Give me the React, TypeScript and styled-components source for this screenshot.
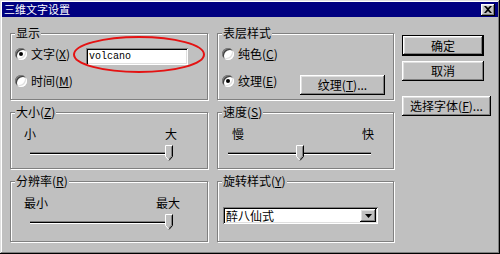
import React from "react";
import styled, { createGlobalStyle } from "styled-components";

const GlobalStyle = createGlobalStyle`
  html, body {
    margin: 0;
    padding: 0;
    background: #c0c0c0;
  }
  body {
    font-family: "Noto Sans CJK SC", "Liberation Sans", sans-serif;
    font-size: 12px;
    color: #000;
  }
`;

const raised = `
  box-shadow: inset -1px -1px #000, inset 1px 1px #fff, inset -2px -2px #808080, inset 2px 2px #dfdfdf;
`;

const sunken = `
  box-shadow: inset 1px 1px #808080, inset -1px -1px #fff, inset 2px 2px #000, inset -2px -2px #dfdfdf;
`;

const Window = styled.div`
  position: relative;
  width: 500px;
  height: 254px;
  box-sizing: border-box;
  padding: 2px;
  background: #c0c0c0;
  box-shadow: inset -1px -1px #000, inset 1px 1px #dfdfdf, inset -2px -2px #808080, inset 2px 2px #fff;
  display: flex;
  flex-direction: column;
`;

const TitleBar = styled.div`
  height: 15px;
  flex: none;
  background: #000080;
  color: #fff;
  display: flex;
  align-items: center;
  justify-content: space-between;
  padding: 0 3px 0 2px;
`;

const Title = styled.span`
  font-size: 11px;
  line-height: 15px;
  letter-spacing: 0;
`;

const CloseButton = styled.span`
  width: 14px;
  height: 12px;
  background: #c0c0c0;
  ${raised}
  display: flex;
  align-items: center;
  justify-content: center;
`;

const Body = styled.div`
  display: flex;
  align-items: flex-start;
  padding: 16px 0 0 8px;
`;

const Groups = styled.div`
  display: grid;
  grid-template-columns: 198px 177px;
  grid-template-rows: 67px 57px 61px;
  column-gap: 9px;
  row-gap: 12px;
`;

const Group = styled.div<{ $pad: string; $gap?: number }>`
  position: relative;
  box-sizing: border-box;
  border: 1px solid #808080;
  box-shadow: 1px 1px 0 #fff, inset 1px 1px 0 #fff;
  padding: ${(p) => p.$pad};
  display: flex;
  flex-direction: column;
  gap: ${(p) => p.$gap ?? 0}px;
`;

const Legend = styled.span`
  position: absolute;
  top: -8px;
  left: 4px;
  padding: 0 1px;
  background: #c0c0c0;
  line-height: 14px;
  white-space: nowrap;
`;

const Row = styled.div`
  display: flex;
  align-items: center;
  height: 20px;
`;

const Option = styled.label<{ $w: number }>`
  display: flex;
  align-items: center;
  gap: 4px;
  width: ${(p) => p.$w}px;
  flex: none;
  line-height: 14px;
  white-space: nowrap;
`;

const RadioDot = styled.span<{ $checked?: boolean }>`
  position: relative;
  flex: none;
  width: 12px;
  height: 12px;
  border-radius: 50%;
  background: #fff;
  box-shadow: inset 1px 1px 0 #808080, inset -1px -1px 0 #fff, inset 2px 2px 0 #404040,
    inset -2px -2px 0 #dfdfdf;
  &::after {
    content: "";
    display: ${(p) => (p.$checked ? "block" : "none")};
    position: absolute;
    left: 4px;
    top: 4px;
    width: 4px;
    height: 4px;
    border-radius: 50%;
    background: #000;
  }
`;

const TextField = styled.div`
  width: 102px;
  height: 17px;
  margin-top: 4px;
  box-sizing: border-box;
  padding-left: 3px;
  background: #fff;
  ${sunken}
  font-family: "Liberation Mono", monospace;
  font-size: 10px;
  line-height: 17px;
`;

const Button = styled.div<{ $w: number; $h: number; $default?: boolean; $mt?: number }>`
  width: ${(p) => p.$w}px;
  height: ${(p) => p.$h}px;
  margin-top: ${(p) => p.$mt ?? 0}px;
  box-sizing: border-box;
  flex: none;
  background: #c0c0c0;
  border: ${(p) => (p.$default ? "1px solid #000" : "0")};
  ${raised}
  display: flex;
  align-items: center;
  justify-content: center;
  line-height: 14px;
  white-space: nowrap;
`;

const Scale = styled.div<{ $pl: number; $pr: number }>`
  display: flex;
  justify-content: space-between;
  padding: 0 ${(p) => p.$pr}px 0 ${(p) => p.$pl}px;
  line-height: 14px;
`;

const Slider = styled.div<{ $ml: number }>`
  position: relative;
  width: 143px;
  height: 16px;
  margin: 4px 0 0 ${(p) => p.$ml}px;
`;

const Track = styled.div`
  margin-top: 7px;
  height: 1px;
  background: #000;
  border-top: 1px solid #808080;
  border-bottom: 1px solid #fff;
`;

const ThumbWrap = styled.span`
  position: absolute;
  top: 0;
  width: 8px;
  height: 16px;
  display: block;
`;

const Combo = styled.div`
  width: 155px;
  height: 17px;
  box-sizing: border-box;
  padding: 2px;
  background: #fff;
  ${sunken}
  display: flex;
  align-items: center;
`;

const ComboText = styled.span`
  flex: 1;
  padding-left: 1px;
  line-height: 13px;
`;

const ComboButton = styled.span`
  width: 16px;
  height: 13px;
  background: #c0c0c0;
  ${raised}
  display: flex;
  align-items: center;
  justify-content: center;
`;

const ButtonCol = styled.div`
  display: flex;
  flex-direction: column;
  margin-left: 8px;
  padding-top: 2px;
`;

const Mark = styled.svg`
  position: absolute;
  left: 62px;
  top: 2px;
  pointer-events: none;
`;

const Thumb = ({ value }: { value: number }) => (
  <ThumbWrap style={{ left: Math.round(value * 135) }}>
    <svg width="8" height="16" viewBox="0 0 8 16">
      <polygon points="0.5,0.5 7.5,0.5 7.5,11.5 4,15.5 0.5,11.5" fill="#c0c0c0" />
      <polyline points="4,15.5 0.5,11.5 0.5,0.5 7.5,0.5" fill="none" stroke="#fff" strokeWidth="1" />
      <polyline points="7.5,0.5 7.5,11.5 4,15.5" fill="none" stroke="#000" strokeWidth="1" />
      <polyline points="6.5,1.5 6.5,11 4,14" fill="none" stroke="#808080" strokeWidth="1" />
    </svg>
  </ThumbWrap>
);

const SliderGroup = ({
  title,
  low,
  high,
  value,
  pl,
  pr,
  ml,
}: {
  title: React.ReactNode;
  low: string;
  high: string;
  value: number;
  pl: number;
  pr: number;
  ml: number;
}) => (
  <Group $pad="14px 0 0 0">
    <Legend>{title}</Legend>
    <Scale $pl={pl} $pr={pr}>
      <span>{low}</span>
      <span>{high}</span>
    </Scale>
    <Slider $ml={ml}>
      <Track />
      <Thumb value={value} />
    </Slider>
  </Group>
);

const App = () => {
  return (
    <>
      <GlobalStyle />
      <Window>
        <TitleBar>
          <Title>三维文字设置</Title>
          <CloseButton>
            <svg width="8" height="7" viewBox="0 0 8 7">
              <path d="M0 0h2l2 2 2-2h2L5 3.5 8 7H6L4 5 2 7H0l3-3.5z" fill="#000" />
            </svg>
          </CloseButton>
        </TitleBar>
        <Body>
          <Groups>
            <Group $pad="10px 0 0 4px" $gap={7}>
              <Legend>显示</Legend>
              <Row>
                <Option $w={71}>
                  <RadioDot $checked />
                  <span>
                    文字(<u>X</u>)
                  </span>
                </Option>
                <TextField>volcano</TextField>
              </Row>
              <Row>
                <Option $w={71}>
                  <RadioDot />
                  <span>
                    时间(<u>M</u>)
                  </span>
                </Option>
              </Row>
              <Mark width="134" height="38" viewBox="0 0 134 38">
                <ellipse cx="66" cy="18.5" rx="65" ry="17.5" fill="none" stroke="#e41212" strokeWidth="2" />
              </Mark>
            </Group>

            <Group $pad="10px 0 0 4px" $gap={7}>
              <Legend>表层样式</Legend>
              <Row>
                <Option $w={78}>
                  <RadioDot />
                  <span>
                    纯色(<u>C</u>)
                  </span>
                </Option>
              </Row>
              <Row>
                <Option $w={78}>
                  <RadioDot $checked />
                  <span>
                    纹理(<u>E</u>)
                  </span>
                </Option>
                <Button $w={85} $h={20} $mt={8}>
                  纹理(<u>T</u>)...
                </Button>
              </Row>
            </Group>

            <SliderGroup
              title={
                <>
                  大小(<u>Z</u>)
                </>
              }
              low="小"
              high="大"
              value={1}
              pl={13}
              pr={30}
              ml={19}
            />
            <SliderGroup
              title={
                <>
                  速度(<u>S</u>)
                </>
              }
              low="慢"
              high="快"
              value={0.5}
              pl={14}
              pr={19}
              ml={10}
            />
            <SliderGroup
              title={
                <>
                  分辨率(<u>R</u>)
                </>
              }
              low="最小"
              high="最大"
              value={1}
              pl={13}
              pr={27}
              ml={19}
            />

            <Group $pad="25px 0 0 5px">
              <Legend>
                旋转样式(<u>Y</u>)
              </Legend>
              <Combo>
                <ComboText>醉八仙式</ComboText>
                <ComboButton>
                  <svg width="7" height="4" viewBox="0 0 7 4">
                    <polygon points="0,0 7,0 3.5,4" fill="#000" />
                  </svg>
                </ComboButton>
              </Combo>
            </Group>
          </Groups>

          <ButtonCol>
            <Button $w={82} $h={21} $default>
              确定
            </Button>
            <Button $w={82} $h={20} $mt={5}>
              取消
            </Button>
            <Button $w={89} $h={20} $mt={15}>
              选择字体(<u>F</u>)...
            </Button>
          </ButtonCol>
        </Body>
      </Window>
    </>
  );
};

export default App;
